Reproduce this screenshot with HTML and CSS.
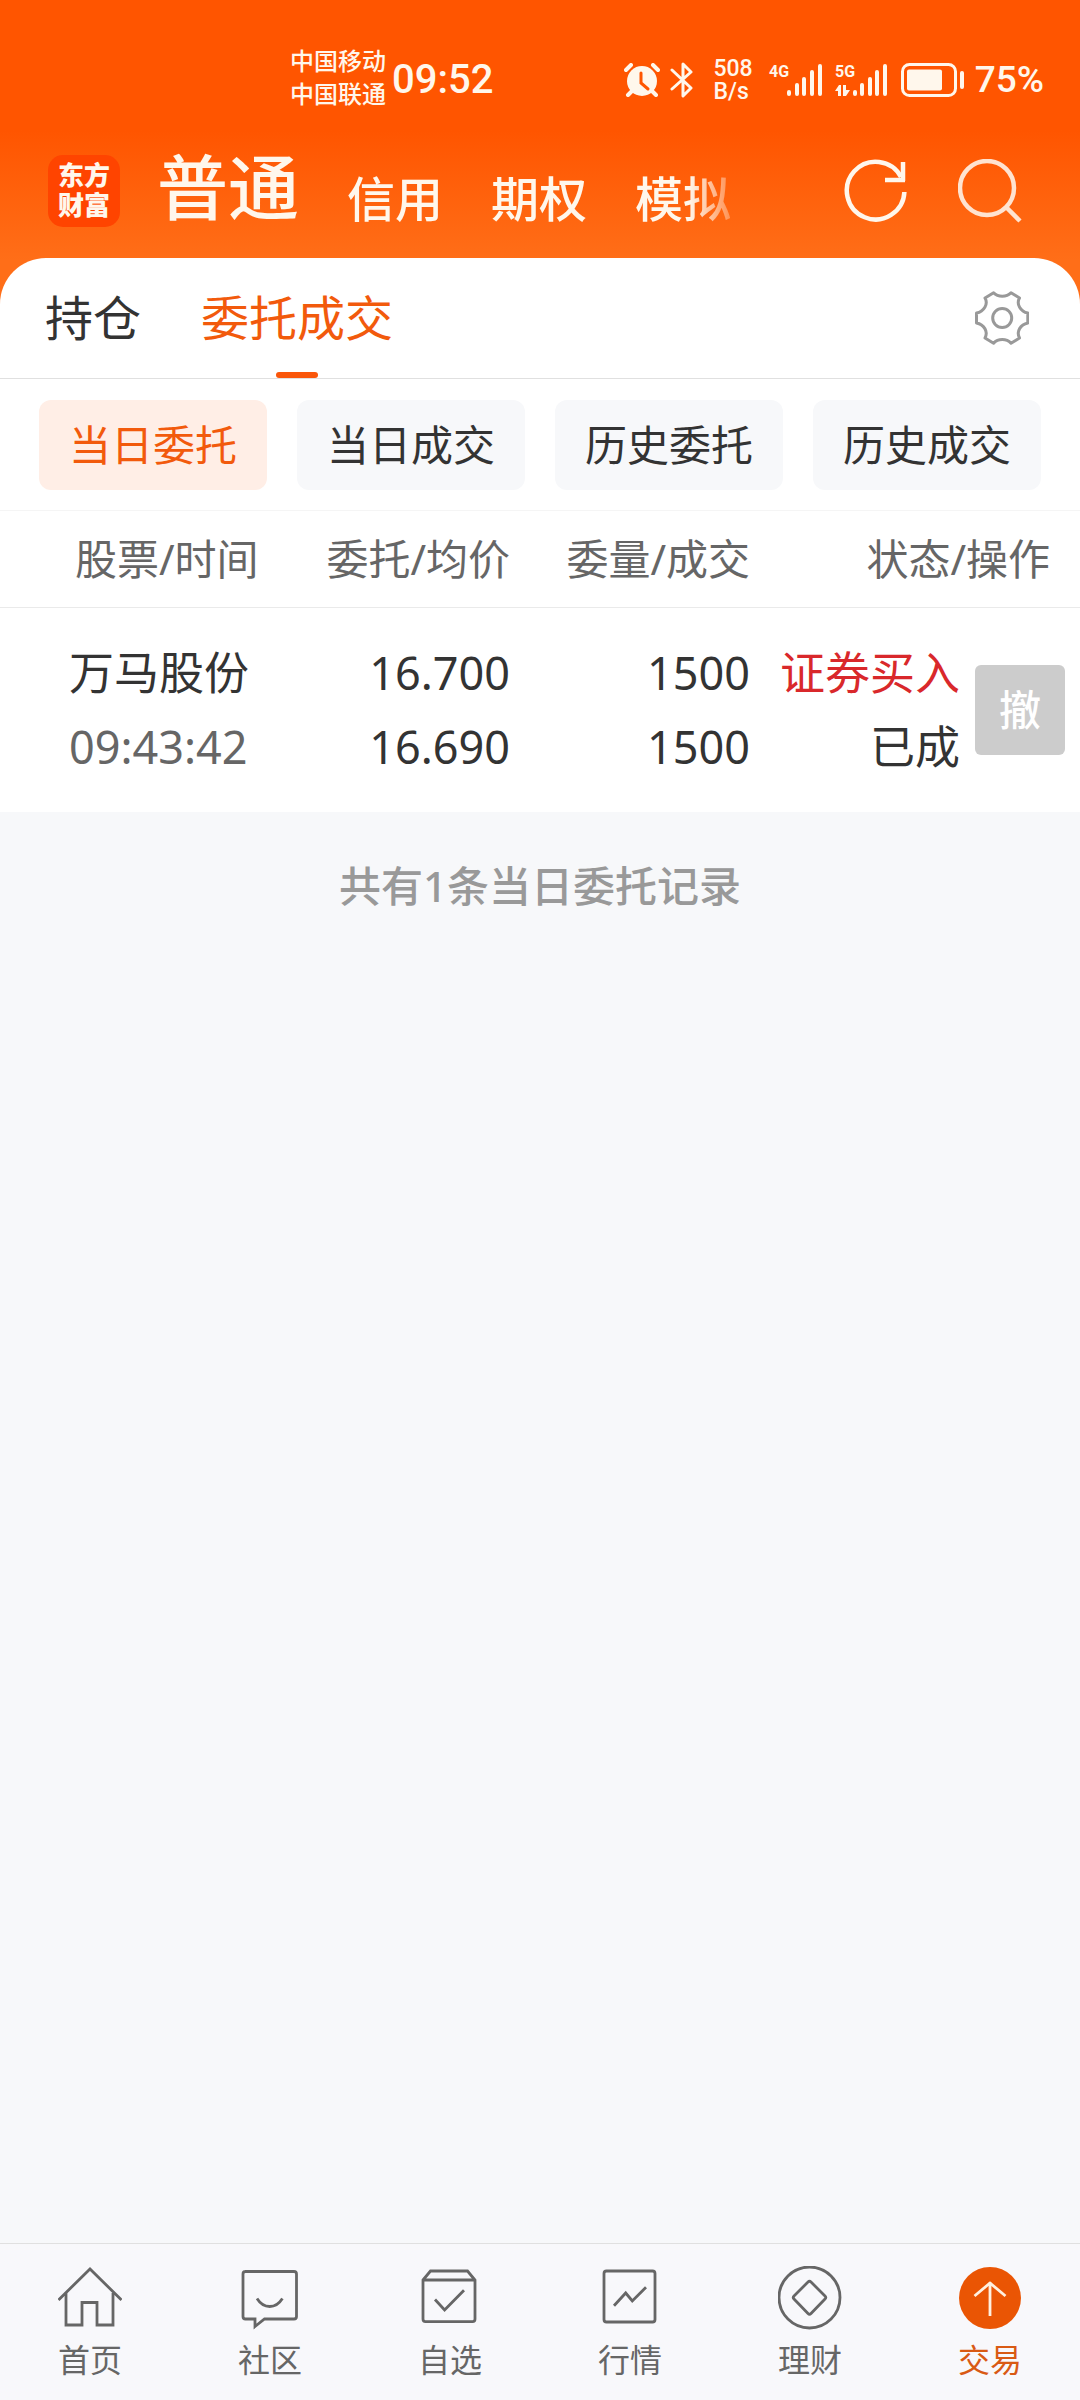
FILE: index.html
```html
<!DOCTYPE html>
<html lang="zh-CN">
<head>
<meta charset="utf-8">
<meta name="viewport" content="width=device-width">
<title>委托成交</title>
<link rel="stylesheet" href="styles.css">
</head>
<body>
<header class="top">
  <div class="status">
    <div class="status-left">
      <div class="carriers"><span>中国移动</span><span>中国联通</span></div>
      <time class="clock">09:52</time>
    </div>
    <div class="status-right">
      <svg class="alarm" width="36" height="34" viewBox="0 0 36 34" aria-hidden="true">
        <circle cx="18" cy="18" r="15" fill="currentColor"/>
        <path d="M2 7l5-5M34 7l-5-5M8 28l-4 4M28 28l4 4" stroke="currentColor" stroke-width="4" stroke-linecap="round"/>
        <path d="M17 10v10l7 6" fill="none" stroke="#ff5500" stroke-width="3" stroke-linecap="round"/>
      </svg>
      <svg class="bluetooth" width="24" height="38" viewBox="0 0 24 38" aria-hidden="true">
        <path d="M2 9l19 18-8 8V3l8 8L2 28" fill="none" stroke="currentColor" stroke-width="3" stroke-linejoin="round" stroke-linecap="round"/>
      </svg>
      <div class="speed"><span>508</span><span>B/s</span></div>
      <svg class="signal" width="54" height="34" viewBox="0 0 54 34" aria-hidden="true">
        <text class="net" x="0" y="14">4G</text>
        <path d="M20 29v2M28 22v9M35 16v15M43 9v22M51 3v28" stroke="currentColor" stroke-width="4" stroke-linecap="round"/>
      </svg>
      <svg class="signal" width="54" height="34" viewBox="0 0 54 34" aria-hidden="true">
        <text class="net" x="0" y="14">5G</text>
        <path d="M20 29v2M27 22v9M35 16v15M42 9v22M50 3v28" stroke="currentColor" stroke-width="4" stroke-linecap="round"/>
        <path d="M0 28l4-6h2v11H3v-5zM8 22h3v5h4l-4 6H8z" fill="currentColor"/>
      </svg>
      <svg class="battery" width="64" height="34" viewBox="0 0 64 34" aria-hidden="true">
        <rect x="1.5" y="1.5" width="53" height="31" rx="7" fill="none" stroke="currentColor" stroke-width="3"/>
        <rect x="6" y="6.500" width="35" height="21" rx="2" fill="currentColor"/>
        <rect x="59" y="8" width="4" height="18" rx="2" fill="currentColor"/>
      </svg>
      <span class="percent">75%</span>
    </div>
  </div>
  <div class="app-bar">
    <div class="logo"><span>东方</span><span>财富</span></div>
    <nav class="accounts">
      <button class="account account-on">普通</button>
      <button class="account">信用</button>
      <button class="account">期权</button>
      <button class="account">模拟</button>
    </nav>
    <button class="icon-btn" aria-label="刷新">
      <svg width="64" height="64" viewBox="0 0 64 64" fill="none" stroke="#fff7ec" stroke-width="4.500">
        <path d="M60.400 33A28.800 28.800 0 1 1 57 18"/>
        <path d="M59 3v19M41 21h20"/>
      </svg>
    </button>
    <button class="icon-btn" aria-label="搜索">
      <svg width="64" height="64" viewBox="0 0 64 64" fill="none" stroke="#ffe3d0" stroke-width="4.500">
        <circle cx="29" cy="29" r="27"/>
        <path d="M48 48l14 14"/>
      </svg>
    </button>
  </div>
</header>

<main class="panel">
  <div class="tabs">
    <button class="tab">持仓</button>
    <button class="tab tab-on">委托成交</button>
    <button class="gear" aria-label="设置">
      <svg width="54" height="54" viewBox="0 0 54 54" fill="none" stroke="#999" stroke-width="3" stroke-linejoin="round">
        <path d="M18.600 1.800L10 7C13.500 13 9 20.500 1.500 22V32C9 33.500 13.500 40.500 10 47L18.600 52.200C23 47.300 31.500 47.300 36 52.200L44.500 47C41 40.500 45.500 33.500 52.800 32V22C45.500 20.500 41 13 44.500 7L36 1.800C31.500 6.500 23 6.500 18.600 1.800Z"/>
        <circle cx="27.200" cy="27" r="9.500"/>
      </svg>
    </button>
  </div>
  <div class="chips">
    <button class="chip chip-on">当日委托</button>
    <button class="chip">当日成交</button>
    <button class="chip">历史委托</button>
    <button class="chip">历史成交</button>
  </div>
  <table class="orders">
    <colgroup><col><col class="c-price"><col class="c-volume"><col class="c-state"><col class="c-action"></colgroup>
    <thead>
      <tr><th class="name">股票/时间</th><th>委托/均价</th><th>委量/成交</th><th class="state-head" colspan="2">状态/操作</th></tr>
    </thead>
    <tbody>
      <tr>
        <td class="name"><div>万马股份</div><div class="muted">09:43:42</div></td>
        <td><div>16.700</div><div>16.690</div></td>
        <td><div>1500</div><div>1500</div></td>
        <td><div class="buy">证券买入</div><div>已成</div></td>
        <td class="action"><button class="cancel">撤</button></td>
      </tr>
    </tbody>
  </table>
</main>
<p class="summary">共有1条当日委托记录</p>

<nav class="tabbar">
  <a class="item" href="#home">
    <svg class="item-icon" viewBox="0 0 64 64" aria-hidden="true"><path d="M.500 34L32 3l31.500 31M8 27v32h16V36.500h15V59h16V27"/></svg>
    <span>首页</span>
  </a>
  <a class="item" href="#community">
    <svg class="item-icon" viewBox="0 0 64 64" aria-hidden="true"><path d="M7 5.500h49q2.500 0 2.500 2.500v42.500q0 2.500-2.500 2.500H26.500L17 60.500V53H7.500Q5 53 5 50.500V8q0-2.500 2.500-2.500zM19 32.500q5 8 12.700 8t12.700-8"/></svg>
    <span>社区</span>
  </a>
  <a class="item" href="#watchlist">
    <svg class="item-icon" viewBox="0 0 64 64" aria-hidden="true"><path d="M5 14l7.500-9h37l7.500 9v39q0 2.700-2.500 2.700h-47Q5 55.700 5 53zM5 14h52M17 33.500L26.600 44 46 24.300"/></svg>
    <span>自选</span>
  </a>
  <a class="item" href="#market">
    <svg class="item-icon" viewBox="0 0 64 64" aria-hidden="true"><rect x="6" y="5" width="51" height="51" rx="2.500"/><path d="M16 39.700L27.700 27l6.600 8L48 21.300"/></svg>
    <span>行情</span>
  </a>
  <a class="item" href="#wealth">
    <svg class="item-icon" viewBox="0 0 64 64" aria-hidden="true"><circle cx="31.500" cy="31.500" r="30.500"/><path d="M30 16q1.500-1.500 3 0l14 14q1.500 1.500 0 3L33 47.500q-1.500 1.500-3 0L16 33q-1.500-1.500 0-3z"/></svg>
    <span>理财</span>
  </a>
  <a class="item item-on" href="#trade" aria-current="page">
    <svg class="item-icon" viewBox="0 0 64 64" aria-hidden="true"><circle cx="32" cy="32" r="31" fill="#ea5504" stroke="none"/><path d="M32 50V16M16.500 30L32 17l15.500 13" stroke="#fff0e0"/></svg>
    <span>交易</span>
  </a>
</nav>
</body>
</html>
```

FILE: styles.css
```css
* {
  box-sizing: border-box;
}

body {
  margin: 0;
  min-height: 100vh;
  display: flex;
  flex-direction: column;
  background: #f7f8fa;
  color: #333;
  font-family: "Noto Sans", "Noto Sans CJK SC", sans-serif;
  font-size: 42px;
}

button {
  margin: 0;
  padding: 0;
  border: 0;
  background: none;
  color: inherit;
  font: inherit;
}

svg {
  display: block;
  flex: none;
}

/* Orange header */

.top {
  padding-bottom: 46px;
  background: linear-gradient(#ff5500 130px, #ff6e18 260px);
  color: #fff7ec;
}

.status {
  display: flex;
  justify-content: space-between;
  align-items: center;
  height: 124px;
  padding: 36px 36px 0 290px;
  font-family: Roboto, "Noto Sans CJK SC", sans-serif;
  font-weight: 500;
}

.status-left,
.status-right {
  display: flex;
  align-items: center;
}

.status-left {
  gap: 6px;
}

.carriers {
  display: flex;
  flex-direction: column;
  padding-bottom: 2px;
  font-size: 24px;
  line-height: 33px;
}

.clock {
  font-size: 40px;
  line-height: 48px;
}

.bluetooth {
  margin-left: 10px;
}

.speed {
  display: flex;
  flex-direction: column;
  margin: 0 16px 0 19px;
  font-size: 23px;
  line-height: 23px;
}

.signal {
  margin-right: 12px;
  overflow: visible;
}

.net {
  fill: currentColor;
  font-size: 16px;
  font-weight: 700;
}

.percent {
  margin-left: 10px;
  font-size: 37px;
  line-height: 48px;
}

.app-bar {
  display: flex;
  align-items: center;
  height: 134px;
  padding: 0 58px 0 48px;
}

.logo {
  display: flex;
  flex-direction: column;
  flex: none;
  justify-content: center;
  width: 72px;
  height: 72px;
  padding-bottom: 2px;
  border-radius: 15px;
  background: #ff4400;
  font-size: 26px;
  font-weight: 900;
  line-height: 30px;
  text-align: center;
}

.accounts {
  display: flex;
  flex: 1;
  align-items: flex-end;
  gap: 48px;
  margin: 0 95px 0 37px;
  padding-bottom: 8px;
  white-space: nowrap;
  -webkit-mask-image: linear-gradient(to left, transparent, #000 60px);
  mask-image: linear-gradient(to left, transparent, #000 60px);
}

.account {
  flex: none;
  font-size: 48px;
  font-weight: 500;
  line-height: 80px;
}

.account-on {
  font-size: 71px;
  line-height: 104px;
}

.icon-btn + .icon-btn {
  margin-left: 50px;
}

/* Content panel */

.panel {
  margin-top: -46px;
  border-radius: 46px 46px 0 0;
  background: #fff;
}

.tabs {
  display: flex;
  align-items: stretch;
  gap: 60px;
  height: 121px;
  padding: 0 51px 0 45px;
  border-bottom: 1px solid #e0e0e0;
}

.tab {
  position: relative;
  padding-bottom: 6px;
  font-size: 48px;
}

.tab-on {
  color: #f25a0c;
}

.tab-on::after {
  content: "";
  position: absolute;
  bottom: 0;
  left: 50%;
  width: 42px;
  height: 6px;
  margin-left: -21px;
  border-radius: 3px;
  background: #fa560a;
}

.gear {
  margin-left: auto;
}

.chips {
  display: grid;
  grid-template-columns: repeat(4, 1fr);
  gap: 30px;
  padding: 21px 39px 20px;
  border-bottom: 1px solid #f5f5f5;
}

.chip {
  height: 90px;
  padding-bottom: 6px;
  border-radius: 12px;
  background: #f7f8fa;
}

.chip-on {
  background: #ffeee6;
  color: #f25a0c;
}

.orders {
  width: 100%;
  border-collapse: separate;
  border-spacing: 0;
  table-layout: fixed;
}

.c-price,
.c-volume {
  width: 240px;
}

.c-state {
  width: 210px;
}

.c-action {
  width: 120px;
}

.orders th {
  height: 97px;
  padding: 0 0 5px;
  border-bottom: 1px solid #eaeaea;
  color: #666;
  font-weight: 400;
  text-align: right;
}

.orders th.name {
  padding-left: 75px;
  text-align: left;
}

.orders th.state-head {
  padding-right: 30px;
}

.orders td {
  padding: 28px 0;
  font-size: 45px;
  line-height: 74px;
  text-align: right;
  white-space: nowrap;
}

.orders td.name {
  padding-left: 69px;
  text-align: left;
}

.orders td.action {
  padding-right: 15px;
}

.muted {
  color: #666;
}

.buy {
  color: #d9282b;
}

.cancel {
  display: block;
  width: 90px;
  height: 90px;
  margin-left: auto;
  border-radius: 6px;
  background: #ccc;
  color: #fff;
  font-size: 42px;
  font-weight: 500;
}

.summary {
  flex: 1;
  margin: 0;
  padding-top: 44px;
  color: #999;
  font-weight: 500;
  line-height: 60px;
  text-align: center;
}

/* Bottom navigation */

.tabbar {
  display: grid;
  grid-template-columns: repeat(6, 1fr);
  height: 157px;
  border-top: 1px solid #e0e0e0;
  background: #f8f8fb;
}

.item {
  display: flex;
  flex-direction: column;
  align-items: center;
  gap: 10px;
  padding-top: 22px;
  color: #666;
  font-size: 32px;
  line-height: 40px;
  text-decoration: none;
}

.item-on {
  color: #d95a14;
}

.item-icon {
  width: 64px;
  height: 64px;
  fill: none;
  stroke: #666;
  stroke-width: 2.8;
}
```
